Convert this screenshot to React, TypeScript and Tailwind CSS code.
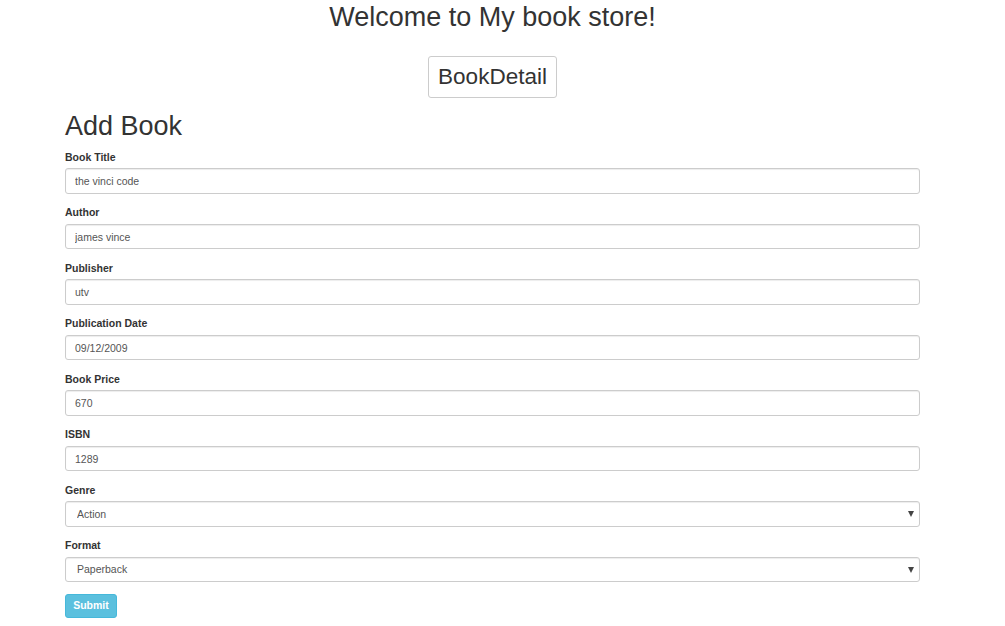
import React from "react";

const fields = [
  { label: "Book Title", value: "the vinci code" },
  { label: "Author", value: "james vince" },
  { label: "Publisher", value: "utv" },
  { label: "Publication Date", value: "09/12/2009" },
  { label: "Book Price", value: "670" },
  { label: "ISBN", value: "1289" },
];

const selects = [
  { label: "Genre", value: "Action" },
  { label: "Format", value: "Paperback" },
];

export default function App() {
  return (
    <div className="min-h-[626px] bg-white text-[#333] font-['Liberation_Sans',Arial,sans-serif]">
      <div className="ml-[65px] w-[855px]">
        <h1 className="pt-[3px] text-center text-[27px] leading-[1.1] font-normal">
          Welcome to My book store!
        </h1>
        <div className="mt-[23.5px] flex justify-center">
          <button className="h-[42px] px-[9px] border border-[#ccc] rounded-[3px] bg-white text-[22.5px] leading-[1.1] text-[#333]">
            BookDetail
          </button>
        </div>
        <h1 className="mt-[14.3px] mb-[7.5px] text-[27px] leading-[1.1] font-normal">Add Book</h1>
        <form onSubmit={(e) => e.preventDefault()}>
          {fields.map((f) => (
            <div key={f.label} className="mb-[11.25px]">
              <label className="block mb-[3.75px] text-[10.5px] leading-[15px] font-bold text-[#333]">
                {f.label}
              </label>
              <input
                type="text"
                defaultValue={f.value}
                className="block w-full h-[25.5px] px-[9px] border border-[#ccc] rounded-[3px] bg-white text-[10.5px] text-[#555] shadow-[inset_0_1px_1px_rgba(0,0,0,0.075)] outline-none"
              />
            </div>
          ))}
          {selects.map((s) => (
            <div key={s.label} className="mb-[11.25px]">
              <label className="block mb-[3.75px] text-[10.5px] leading-[15px] font-bold text-[#333]">
                {s.label}
              </label>
              <div className="relative">
                <select
                  defaultValue={s.value}
                  className="block w-full h-[25.5px] pl-[11px] pr-[20px] pt-[1px] border border-[#ccc] rounded-[3px] bg-white text-[10.5px] text-[#555] shadow-[inset_0_1px_1px_rgba(0,0,0,0.075)] appearance-none outline-none"
                >
                  <option value={s.value}>{s.value}</option>
                </select>
                <span className="pointer-events-none absolute right-[6px] top-[10px] w-0 h-0 border-l-[3.5px] border-r-[3.5px] border-t-[6px] border-l-transparent border-r-transparent border-t-[#444]" />
              </div>
            </div>
          ))}
          <button
            type="submit"
            className="block w-[52px] h-[24px] border border-[#46b8da] rounded-[3px] bg-[#5bc0de] text-white font-bold text-[10.5px] leading-none"
          >
            Submit
          </button>
        </form>
      </div>
    </div>
  );
}
